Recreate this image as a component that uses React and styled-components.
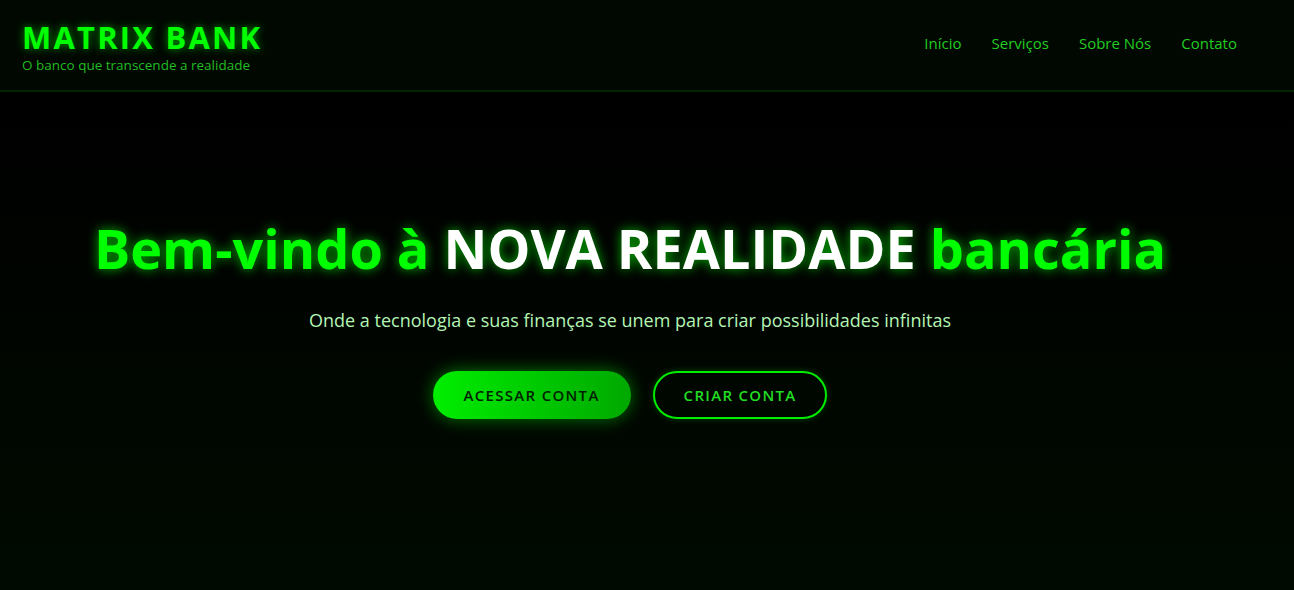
import styled, { createGlobalStyle } from "styled-components";

const GlobalStyle = createGlobalStyle`
    * {
        margin: 0;
        padding: 0;
        box-sizing: border-box;
    }
    body {
        background: #000000;
        font-family: 'Open Sans', 'Noto Sans', sans-serif;
    }
`;

const links = ["Início", "Serviços", "Sobre Nós", "Contato"];

function App() {
    return (
        <Page>
            <GlobalStyle />
            <Header>
                <Logo>
                    <h1>MATRIX BANK</h1>
                    <p>O banco que transcende a realidade</p>
                </Logo>
                <Nav>
                    {links.map((link) => (
                        <a key={link} href="#">{link}</a>
                    ))}
                </Nav>
            </Header>
            <Hero>
                <Title>
                    Bem-vindo à <span>NOVA REALIDADE</span> bancária
                </Title>
                <Subtitle>Onde a tecnologia e suas finanças se unem para criar possibilidades infinitas</Subtitle>
                <Buttons>
                    <Button $primary>ACESSAR CONTA</Button>
                    <Button>CRIAR CONTA</Button>
                </Buttons>
            </Hero>
        </Page>
    );
}

export default App;

const Page = styled.div`
    width: 100%;
    min-height: 100vh;
    display: flex;
    flex-direction: column;
    background: #000000;
`;

const Header = styled.header`
    height: 92px;
    display: flex;
    justify-content: space-between;
    align-items: center;
    padding: 0 57px 0 22px;
    background: #010801;
    border-bottom: 2px solid rgba(0, 255, 0, 0.12);
`;

const Logo = styled.div`
    display: flex;
    flex-direction: column;
    padding-top: 5px;

    h1 {
        font-size: 31px;
        font-weight: 700;
        line-height: 1;
        letter-spacing: 2.2px;
        color: #00ff00;
        text-shadow: 0 0 8px rgba(0, 255, 0, 0.6);
    }

    p {
        margin-top: 4px;
        font-size: 13.5px;
        line-height: 1.2;
        color: #22bb22;
    }
`;

const Nav = styled.nav`
    display: flex;
    gap: 30px;
    padding-bottom: 4px;

    a {
        font-size: 15px;
        color: #22cc22;
        text-decoration: none;
    }
`;

const Hero = styled.main`
    flex: 1;
    display: flex;
    flex-direction: column;
    align-items: center;
    padding: 124px 34px 0 0;
    background: linear-gradient(180deg, #000000 0%, #000a00 100%);
`;

const Title = styled.h2`
    font-size: 54px;
    font-weight: 700;
    line-height: 1.2;
    color: #00ff00;
    text-shadow: 0 0 12px rgba(0, 255, 0, 0.7);
    white-space: nowrap;

    span {
        color: #ffffff;
        text-shadow: 0 0 12px rgba(0, 255, 0, 0.7);
    }
`;

const Subtitle = styled.p`
    margin-top: 27px;
    font-size: 18px;
    color: #b4f5b4;
`;

const Buttons = styled.div`
    display: flex;
    gap: 22px;
    margin-top: 39px;
`;

const Button = styled.button`
    height: 48px;
    padding: 0 ${(p) => (p.$primary ? "31px" : "29px")};
    border-radius: 25px;
    font-family: 'Open Sans', 'Noto Sans', sans-serif;
    font-size: 15px;
    font-weight: 600;
    letter-spacing: 1.3px;
    cursor: pointer;
    color: ${(p) => (p.$primary ? "#002200" : "#22dd22")};
    background: ${(p) => (p.$primary ? "linear-gradient(90deg, #00ee00, #00a800)" : "transparent")};
    border: ${(p) => (p.$primary ? "none" : "2px solid #00ee00")};
    box-shadow: ${(p) => (p.$primary ? "0 0 18px rgba(0, 255, 0, 0.45)" : "0 0 6px rgba(0, 255, 0, 0.25)")};
`;
